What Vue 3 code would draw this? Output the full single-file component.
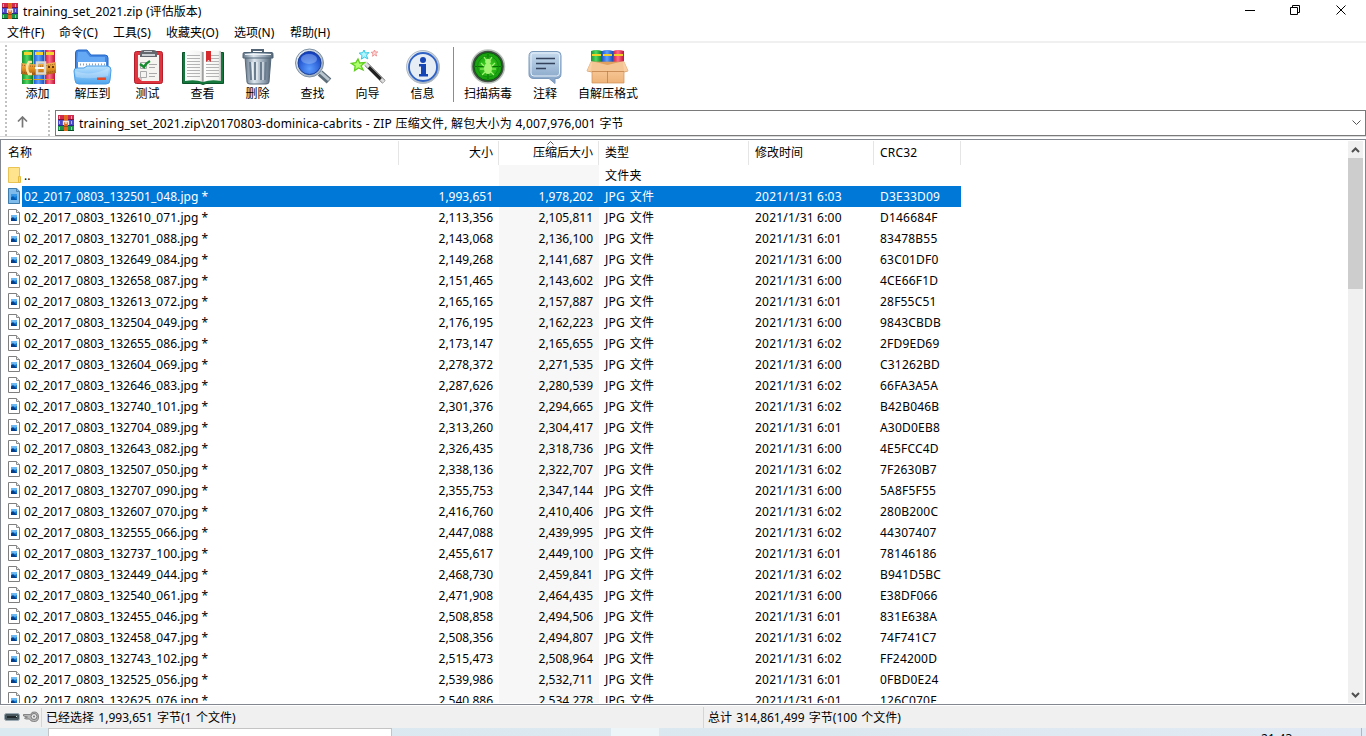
<script setup>
const menus = [
  { t: '文件(F)', w: 52 }, { t: '命令(C)', w: 54 }, { t: '工具(S)', w: 53 },
  { t: '收藏夹(O)', w: 68 }, { t: '选项(N)', w: 56 }, { t: '帮助(H)', w: 60 },
]
const tools = [
  { id: 'add', t: '添加', w: 55 }, { id: 'extract', t: '解压到', w: 55 }, { id: 'test', t: '测试', w: 55 },
  { id: 'view', t: '查看', w: 55 }, { id: 'del', t: '删除', w: 55 }, { id: 'find', t: '查找', w: 55 },
  { id: 'wizard', t: '向导', w: 55 }, { id: 'info', t: '信息', w: 55 }, { id: 'sep', w: 6 },
  { id: 'scan', t: '扫描病毒', w: 60 }, { id: 'comment', t: '注释', w: 54 }, { id: 'sfx', t: '自解压格式', w: 72 },
]
const rows = [
  ['132501_048', '1,993,651', '1,978,202', '6:03', 'D3E33D09'],
  ['132610_071', '2,113,356', '2,105,811', '6:00', 'D146684F'],
  ['132701_088', '2,143,068', '2,136,100', '6:01', '83478B55'],
  ['132649_084', '2,149,268', '2,141,687', '6:00', '63C01DF0'],
  ['132658_087', '2,151,465', '2,143,602', '6:00', '4CE66F1D'],
  ['132613_072', '2,165,165', '2,157,887', '6:01', '28F55C51'],
  ['132504_049', '2,176,195', '2,162,223', '6:00', '9843CBDB'],
  ['132655_086', '2,173,147', '2,165,655', '6:02', '2FD9ED69'],
  ['132604_069', '2,278,372', '2,271,535', '6:00', 'C31262BD'],
  ['132646_083', '2,287,626', '2,280,539', '6:02', '66FA3A5A'],
  ['132740_101', '2,301,376', '2,294,665', '6:02', 'B42B046B'],
  ['132704_089', '2,313,260', '2,304,417', '6:01', 'A30D0EB8'],
  ['132643_082', '2,326,435', '2,318,736', '6:00', '4E5FCC4D'],
  ['132507_050', '2,338,136', '2,322,707', '6:02', '7F2630B7'],
  ['132707_090', '2,355,753', '2,347,144', '6:00', '5A8F5F55'],
  ['132607_070', '2,416,760', '2,410,406', '6:02', '280B200C'],
  ['132555_066', '2,447,088', '2,439,995', '6:02', '44307407'],
  ['132737_100', '2,455,617', '2,449,100', '6:01', '78146186'],
  ['132449_044', '2,468,730', '2,459,841', '6:02', 'B941D5BC'],
  ['132540_061', '2,471,908', '2,464,435', '6:00', 'E38DF066'],
  ['132455_046', '2,508,858', '2,494,506', '6:01', '831E638A'],
  ['132458_047', '2,508,356', '2,494,807', '6:02', '74F741C7'],
  ['132743_102', '2,515,473', '2,508,964', '6:02', 'FF24200D'],
  ['132525_056', '2,539,986', '2,532,711', '6:01', '0FBD0E24'],
  ['132625_076', '2,540,886', '2,534,278', '6:01', '126C070F'],
]
</script>

<template>
  <div class="win">
    <svg width="0" height="0" class="defs">
      <defs>
        <linearGradient id="gGreen"><stop offset="0" stop-color="#15922c" /><stop offset=".45" stop-color="#4fd862" /><stop offset="1" stop-color="#0d7a26" /></linearGradient>
        <linearGradient id="gBlue"><stop offset="0" stop-color="#1f55cc" /><stop offset=".45" stop-color="#5da2fb" /><stop offset="1" stop-color="#1a4bb8" /></linearGradient>
        <linearGradient id="gRed"><stop offset="0" stop-color="#cf1a3c" /><stop offset=".45" stop-color="#ff6e8a" /><stop offset="1" stop-color="#c01335" /></linearGradient>
        <linearGradient id="gBelt" x2="0" y2="1"><stop offset="0" stop-color="#f8bd58" /><stop offset=".5" stop-color="#e39222" /><stop offset="1" stop-color="#a65a0c" /></linearGradient>
        <linearGradient id="gFold" x2="0" y2="1"><stop offset="0" stop-color="#b9e2ff" /><stop offset="1" stop-color="#4fa4ee" /></linearGradient>
        <linearGradient id="gBin"><stop offset="0" stop-color="#66788a" /><stop offset=".35" stop-color="#dde6ee" /><stop offset=".7" stop-color="#9aaab9" /><stop offset="1" stop-color="#536577" /></linearGradient>
        <radialGradient id="gLens" cx=".5" cy=".75" r=".7"><stop offset="0" stop-color="#5c9dff" /><stop offset="1" stop-color="#123fc0" /></radialGradient>
        <linearGradient id="gSteel" x2="1" y2="1"><stop offset="0" stop-color="#f2f6fa" /><stop offset="1" stop-color="#8fa0b1" /></linearGradient>
        <radialGradient id="gScan"><stop offset="0" stop-color="#46da25" /><stop offset="1" stop-color="#129a0b" /></radialGradient>
        <linearGradient id="gNote" x2="0" y2="1"><stop offset="0" stop-color="#c7dbee" /><stop offset="1" stop-color="#7f9fc4" /></linearGradient>
        <linearGradient id="gBox" x2="0" y2="1"><stop offset="0" stop-color="#fcd2a5" /><stop offset="1" stop-color="#eeb37a" /></linearGradient>
        <linearGradient id="gPage"><stop offset="0" stop-color="#fff" /><stop offset=".85" stop-color="#f4f4f2" /><stop offset="1" stop-color="#bcbcbc" /></linearGradient>
        <symbol id="rar" viewBox="0 0 16 16">
          <path fill="#d02a4c" d="M0 0h16v5H0z" /><path fill="#4a48c4" d="M0 5h16v6H0z" /><path fill="#1d9449" d="M0 11h16v5H0z" />
          <path fill="#86103a" d="M0 4h16v1H0z" /><path fill="#272c88" d="M0 10h16v1H0z" /><path fill="#075127" d="M0 15h16v1H0z" />
          <path fill="#e8b84a" d="M1 1h1v3H1zM13 1h1v3h-1zM1 6h1v3H1zM13 6h1v3h-1zM1 12h1v3H1zM13 12h1v3h-1z" />
          <path fill="#e26a1f" d="M6 0h4v16H6z" /><path fill="#a3450f" d="M6 11h4v1H6z" /><path fill="none" stroke="#f2e8df" stroke-width="1.3" d="M5.500 10V6.500h5V10M8 6v3" />
        </symbol>
        <symbol id="jpg" viewBox="0 0 12 16">
          <path fill="#fff" stroke="#7f7f7f" d="M.5.500h8l3 3v12H.5z" /><path fill="#eee" stroke="#8a8a8a" d="M8.500.500v3h3" />
          <path fill="#1479d0" d="M3 6h6v6H3z" /><path fill="#6db8f0" d="M3 6h6v2L7 9 5 8 3 9z" /><path fill="#073f88" d="M3 12V9.500l2-1 4 3.500z" />
        </symbol>
      </defs>
    </svg>

    <header class="title">
      <svg class="rar"><use href="#rar" /></svg>
      <span>training_set_2021.zip (评估版本)</span>
      <svg class="controls" width="110" height="22" fill="none" stroke="#000">
        <path d="M5 10.500h10M50.500 7.500h7v7h-7zM52.500 7v-1.500h7v7H58M96.500 5.500l9 9M105.500 5.500l-9 9" />
      </svg>
    </header>
    <nav class="menu"><span v-for="m in menus" :key="m.t" :style="{ width: m.w + 'px' }">{{ m.t }}</span></nav>

    <div class="toolbar">
      <i class="grip"></i>
      <div v-for="t in tools" :key="t.id" class="tool" :class="{ sep: t.id === 'sep' }" :style="{ width: t.w + 'px' }">
        <svg v-if="t.id !== 'sep'" width="44" height="38" viewBox="0 0 44 38">
          <g v-if="t.id === 'add'" transform="translate(1 0)">
            <path fill="url(#gGreen)" d="M5 3l2-1h9v34H5z" /><path fill="url(#gBlue)" d="M16.500 2h11v34h-11z" /><path fill="url(#gRed)" d="M28 2h10v34H28z" />
            <path fill="#f4d52e" d="M7 4h8v3H7zM18 4h8v3h-8zM29 4h8v3h-8z" /><path fill="#db9d20" d="M6 31h9v1H6zM17 31h10v1H17zM28 31h9v1h-9z" />
            <path fill="url(#gBelt)" d="M4 15q17 3 35-1v11q-17 4-35 1z" /><path fill="none" stroke="#8f4d10" stroke-dasharray="1 1" d="M5 17q16 3 33-1M5 24q16 3 33-1" />
            <path fill="none" stroke="#ffe4a0" stroke-width="2.500" d="M15 14h-3q-4 6 0 12h3" /><path fill="none" stroke="#d9d9d2" stroke-width="2.500" d="M20 14.500h8v11h-8z" />
            <path fill="#fff" d="M18 19h9v2h-9z" /><path fill="#66340e" d="M31 18h2v2h-2zM35 18h2v2h-2z" />
          </g>
          <g v-else-if="t.id === 'extract'">
            <path fill="#4387e2" stroke="#2166c8" d="M4.500 32V5q0-3 3-3H16l4 5h14q3 0 3 3v23z" /><path fill="#65a9f4" d="M7 4h8l4 5h15v5H6z" />
            <path fill="#fafcff" d="M7 14h28v8H7z" /><path stroke="#8fa4ba" stroke-dasharray="1 2" stroke-width="2" d="M9 16.500h25" />
            <path fill="url(#gFold)" stroke="#489de6" d="M6 20h7l3-2h20q4 0 4 4l-1 10q0 4-4 4H8q-4 0-4-4l-1-9q0-3 3-3z" />
            <path fill="#fff" opacity=".25" d="M4 23q16 6 34-3l-1 8q-18 4-32 1z" /><path fill="#e64a27" d="M26 29.500h9v2.500h-9z" />
          </g>
          <g v-else-if="t.id === 'test'">
            <path fill="#e0343f" stroke="#b41d2a" d="M10.500 3.500h24q2 0 2 2v28q0 2-2 2h-24q-2 0-2-2v-28q0-2 2-2z" /><path fill="#f5f4f1" d="M12 7h21v26H16l-4-4z" /><path fill="#c4c5c6" d="M12 29h4v4z" />
            <path fill="#62686e" d="M14 9V5q0-3 4-3h9q4 0 4 3v4z" /><path fill="#cbd0d5" d="M16 8h13V6H16zM18 4h8V3h-8z" />
            <path fill="none" stroke="#aaa" d="M14.500 14.500h6v6h-6zM14.500 23.500h6v6h-6zM23 16.500h8M23 19.500h6M23 25.500h8M23 28.500h6" /><path fill="none" stroke="#168c2f" stroke-width="2.500" d="M14 16l4 3q2-4 6-6" />
          </g>
          <g v-else-if="t.id === 'view'">
            <path fill="#16773c" stroke="#0b5429" d="M1.500 4.500h41v31H25l-3 1-3-1H1.500z" /><path fill="url(#gPage)" d="M4 3q12-2 18 1v30q-8-3-18-1z" /><path fill="url(#gPage)" d="M22 4q8-3 18-1v30q-10-2-18 1z" />
            <path fill="none" stroke="#b4b4b4" d="M6 7.500h13M6 10.500h13M6 13.500h13M6 16.500h13M6 19.500h13M6 22.500h13M6 25.500h13M6 28.500h13M25 7.500h13M25 10.500h13M25 13.500h13M25 16.500h13M25 19.500h13M25 22.500h13M25 25.500h13M25 28.500h13" />
            <path stroke="#777" d="M22 4v30" /><path fill="#d52a2e" d="M25 3h5v11l-2.500-2-2.500 2z" />
          </g>
          <g v-else-if="t.id === 'del'">
            <path fill="none" stroke="#526476" stroke-width="2" d="M16 5V2h11v3" /><path fill="url(#gBin)" stroke="#566879" d="M9 9h26l-2 25q0 2-3 2H14q-3 0-3-2z" />
            <path stroke="#6b7e90" stroke-width="2" d="M14 14l1 18M19 14v18M25 14v18M30 14l-1 18" /><path stroke="#f2f6f9" d="M16 14l1 18M21 14v18M27 14v18" />
            <path fill="url(#gBin)" stroke="#506477" d="M8 4.500h28q1 0 1 2V10H7V6.500q0-2 1-2z" /><path stroke="#eef3f7" d="M9 6.500h26" />
          </g>
          <g v-else-if="t.id === 'find'">
            <path stroke="#5d6c79" stroke-width="7" d="M29 25l9 8" /><path stroke="#b9c6d0" stroke-width="3" d="M29 24l9 8" />
            <circle cx="18.500" cy="15" r="14" fill="url(#gSteel)" stroke="#7d91a4" /><circle cx="18.500" cy="15" r="11.500" fill="url(#gLens)" stroke="#1b3f99" /><ellipse cx="18" cy="11" rx="8" ry="5" fill="#b1cfff" opacity=".4" />
          </g>
          <g v-else-if="t.id === 'wizard'">
            <path stroke="#222" stroke-width="4" d="M20 16l18 18" /><path stroke="#ddd" stroke-width="3.200" d="M19 15l4 4M35 31l3 3" /><path stroke="#888" d="M24 18l12 12" />
            <path fill="#afff70" stroke="#60cf1d" stroke-width="1.300" d="M12 11l1.700 4 5-.5-3.600 3.300 2 4.200-4.600-2-4 2.600.6-4.600-3.800-2.700 4.600-.7z" />
            <path fill="#b2f5ff" stroke="#2cc7e6" d="M18 2l1.300 3 3.600-.4-2.500 2.700 1.400 3.500-3.400-1.700-3 2 .6-3.700-2.800-2.300 3.400-.4z" />
            <path fill="#ffdada" stroke="#ee8585" stroke-width=".8" d="M28.500 2l.8 2 2.500-.1-2 1.700.9 2.400-2.200-1.300-2 1.600.5-2.500-1.900-1.500 2.500-.2z" />
          </g>
          <g v-else-if="t.id === 'info'">
            <circle cx="22" cy="19" r="16.500" fill="url(#gSteel)" stroke="#b2bdc9" /><circle cx="22" cy="19" r="14" fill="#e7edf4" stroke="#2f62c6" stroke-width="1.800" />
            <circle cx="22" cy="12" r="3" fill="#1646b5" /><path fill="#1646b5" d="M18 16h7v10h2v2.500h-9V26h2v-7.500h-2z" />
          </g>
          <g v-else-if="t.id === 'scan'">
            <circle cx="22" cy="18.500" r="16.500" fill="#454d47" stroke="#bac2bc" stroke-width="1.500" /><circle cx="22" cy="18.500" r="14" fill="url(#gScan)" stroke="#0b5810" />
            <path fill="none" stroke="#0a6d08" d="M9 18.500h26M22 6v25" /><circle cx="22" cy="18.500" r="10.500" fill="none" stroke="#138c10" />
            <ellipse cx="22" cy="20.500" rx="4" ry="5.500" fill="#a3f474" /><circle cx="22" cy="13.500" r="2.800" fill="#a3f474" /><path fill="none" stroke="#a3f474" stroke-width="1.200" d="M20 12l-2-3M24 12l2-3M18 18l-3-3M26 18l3-3M18 21h-4M26 21h4M19 24l-3 3M25 24l3 3" />
          </g>
          <g v-else-if="t.id === 'comment'">
            <path fill="url(#gNote)" stroke="#7c9abc" d="M10 3.500h24q4 0 4 4v18q0 5-4 5h-2v5l-6-5H11q-5 0-5-4v-18q0-5 4-5z" /><path fill="none" stroke="#e7f1fa" d="M10 5h24q2.500 0 2.500 3v17q0 3-3 3H11q-3 0-3-3V8q0-3 2-3z" />
            <path fill="none" stroke="#33425a" stroke-width="1.500" d="M13 10.500h19M13 15.500h19M13 20.500h10" />
          </g>
          <g v-else>
            <path fill="url(#gGreen)" d="M5 3q5-2 11 0v15H5z" /><path fill="url(#gBlue)" d="M16 3q5-2 11 0v15H16z" /><path fill="url(#gRed)" d="M27 3q5-2 11 0v15H27z" />
            <path fill="#f4cf24" d="M6 6h9v2H6zM17 6h9v2h-9zM28 6h9v2h-9z" /><path fill="url(#gBox)" stroke="#cf9058" stroke-width=".7" d="M5 14h33l4 9-4 1v11H6V24l-5-1z" />
            <path fill="#e0a060" d="M6 14h31l1 9H5z" /><path fill="#fbd3a8" d="M5 13L1 23h20.500V17zM38 13l4 10H21.500V17z" opacity=".75" /><path fill="none" stroke="#b97942" stroke-width=".7" d="M6 23.500h32M21.500 23v12" />
          </g>
        </svg>
        <span v-if="t.t">{{ t.t }}</span>
      </div>
    </div>

    <div class="address">
      <i class="grip"></i>
      <div class="up"><svg width="11" height="12" viewBox="0 0 11 12" fill="none" stroke="#777" stroke-width="1.700"><path d="M5.500 11.500V1.500M1 5.500l4.500-4.500L10 5.500" /></svg></div>
      <i class="grip"></i>
      <div class="path">
        <svg class="rar"><use href="#rar" /></svg>
        <span>training_set_2021.zip\20170803-dominica-cabrits - ZIP 压缩文件, 解包大小为 4,007,976,001 字节</span>
        <svg class="drop" width="9" height="6" fill="none" stroke="#555"><path d="M.5.500l4 4 4-4" /></svg>
      </div>
    </div>

    <main class="list">
      <div class="table">
        <div class="row head">
          <div class="name">名称</div><div class="num">大小</div>
          <div class="num packed"><svg class="sort" width="7" height="4" fill="none" stroke="#555"><path d="M.5 3.500l3-3 3 3" /></svg>压缩后大小</div>
          <div class="type">类型</div><div class="date">修改时间</div><div class="crc">CRC32</div>
        </div>
        <div class="row">
          <div class="name"><svg class="file folder" width="13" height="16"><path fill="#ffe48d" stroke="#e9c455" d="M.5.500h11v15H.5z" /><path fill="#f7d878" stroke="#e5bb43" d="M10.500 9.500h2v6h-2z" /></svg><span>..</span></div>
          <div class="num"></div><div class="num packed"></div><div class="type">文件夹</div>
        </div>
        <div v-for="(r, i) in rows" :key="r[0]" class="row" :class="{ selected: i === 0 }">
          <div class="name"><svg class="file"><use href="#jpg" /><path v-if="i === 0" fill="#0078d7" opacity=".5" d="M0 0h9l3 3v13H0z" /></svg><span>02_2017_0803_{{ r[0] }}.jpg *</span></div>
          <div class="num">{{ r[1] }}</div><div class="num packed">{{ r[2] }}</div>
          <div class="type">JPG 文件</div><div class="date">2021/1/31 {{ r[3] }}</div><div class="crc">{{ r[4] }}</div>
        </div>
      </div>
      <div class="scroll">
        <svg width="15" height="17" fill="none" stroke="#505050" stroke-width="2"><path d="M4 11l3.500-3.500L11 11" /></svg>
        <i class="thumb"></i>
        <svg class="down" width="15" height="17" fill="none" stroke="#505050" stroke-width="2"><path d="M4 7l3.500 3.500L11 7" /></svg>
      </div>
    </main>

    <footer class="status">
      <svg width="42" height="20">
        <rect x="4.500" y="6.500" width="15" height="7" rx="2" fill="#48565e" stroke="#9cabb3" /><path stroke="#20282c" stroke-width="2" d="M7 10h10" /><path stroke="#c8ddd5" d="M16 9.500h1" />
        <path fill="#b7b7b7" stroke="#707070" stroke-width=".8" d="M23.500 7.500h7q1-3 4-2.500 4 0 4 5t-5 4.500q-3 0-4-2.500h-4l-1-1 3-1-4-1z" /><circle cx="34" cy="9.500" r="3" fill="#e8e8e8" stroke="#777" /><circle cx="34" cy="9.500" r="1" fill="#777" />
        <path stroke="#d5d5d5" d="M41.500 1v19" />
      </svg>
      <span class="left">已经选择 1,993,651 字节(1 个文件)</span>
      <span class="right">总计 314,861,499 字节(100 个文件)</span>
    </footer>
    <div class="taskbar"><i class="search"></i><i class="active"></i><span class="clock">21:43</span></div>
  </div>
</template>

<style>
body { overflow: hidden; }
</style>
<style scoped>
* { box-sizing: border-box; }
.win { width: 1366px; height: 736px; overflow: hidden; display: flex; flex-direction: column; background: #fff; color: #000; font: 12px/20px "Noto Sans", "Noto Sans CJK SC", sans-serif; white-space: nowrap; }
.win > * { flex-shrink: 0; }
.defs { position: absolute; }
.rar { width: 16px; height: 16px; flex: none; }
.title { display: flex; align-items: center; height: 22px; padding: 0 16px 0 2px; gap: 5px; }
.title span { letter-spacing: .06px; padding-top: 2px; }
.controls { margin-left: auto; }
.menu { display: flex; height: 21px; padding-left: 7px; border-bottom: 2px solid #f0f0f0; line-height: 21px; }
.toolbar { display: flex; height: 65px; padding-left: 5px; }
.grip { width: 2px; background: repeating-linear-gradient(#c2c2c2 0 2px, #fff 2px 4px); margin-top: 2px; }
.toolbar .grip { margin-right: 3px; }
.tool { display: flex; flex-direction: column; align-items: center; padding-top: 5px; line-height: 16px; }
.tool span { line-height: 16px; }
.sep { border-left: 1px solid #8c8c8c; margin: 4px 0 6px 3px; }
.tool.sep + .tool { margin-left: -1px; }
.address { display: flex; height: 29px; padding: 0 0 0 5px; border-bottom: 1px solid #d9d9d9; }
.up { width: 41px; padding: 6px 0 0 10px; line-height: 12px; }
.up svg { display: block; margin-top: 2px; }
.path { flex: 1; display: flex; align-items: center; margin: 2px 0 1px 5px; height: 26px; border: 1px solid #7a7a7a; padding: 0 4px 0 2px; gap: 5px; }
.path span { letter-spacing: .16px; word-spacing: .3px; padding-top: 2px; }
.drop { margin-left: auto; }
.list { display: flex; justify-content: space-between; height: 566px; margin-top: 2px; border: 1px solid #828790; padding: 0 2px 1px 0; overflow: hidden; }
.table { width: 960px; height: 563px; overflow: hidden; }
.row { display: flex; height: 21px; line-height: 21px; }
.row > div { flex: none; }
.name { display: flex; width: 398px; padding-left: 7px; }
.name span { flex: 1; padding-left: 2px; letter-spacing: .06px; }
.file { width: 12px; height: 16px; margin: 2px 2px 0 0; }
.folder { width: 13px; margin-right: 1px; }
.num { width: 100px; padding-right: 6px; text-align: right; }
.packed { position: relative; background: #f7f7f7; }
.type { width: 150px; padding-left: 6px; word-spacing: 1.5px; letter-spacing: .2px; }
.date { width: 125px; padding-left: 6px; letter-spacing: .2px; }
.crc { width: 87px; padding-left: 6px; letter-spacing: .2px; }
.head .type, .head .date { letter-spacing: 0; }
.head { height: 25px; line-height: 25px; }
.head > div { border-right: 1px solid #e5e5e5; height: 24px; margin-top: 1px; line-height: 24px; }
.head .num { padding-right: 5px; }
.head .packed { background: none; }
.sort { position: absolute; top: 0; left: 48px; }
.selected { color: #fff; background: linear-gradient(90deg, transparent 21px, #0078d7 21px); }
.selected .packed { background: none; }
.scroll { display: flex; flex-direction: column; width: 15px; height: 562px; margin-top: 1px; background: #f0f0f0; }
.thumb { height: 131px; background: #cdcdcd; }
.down { margin-top: auto; }
.status { display: flex; height: 23px; background: #f0f0f0; border-top: 1px solid #fff; padding-top: 1px; line-height: 22px; word-spacing: 1.2px; }
.left { width: 661px; padding-left: 4px; }
.right { border-left: 1px solid #d5d5d5; padding-left: 4px; }
.taskbar { display: flex; height: 8px; background: linear-gradient(90deg, #dbe9f0, #dce8ef 60%, #e1eaf4); overflow: hidden; padding-left: 48px; }
.search { width: 344px; background: #fff; border: 1px solid #c4c4c4; border-bottom: 0; }
.active { width: 48px; margin-left: 219px; background: #eef5f8; }
.clock { margin-left: auto; width: 101px; border-right: 1px solid #aab8c5; margin-right: 4px; line-height: 21px; letter-spacing: .2px; }
</style>
